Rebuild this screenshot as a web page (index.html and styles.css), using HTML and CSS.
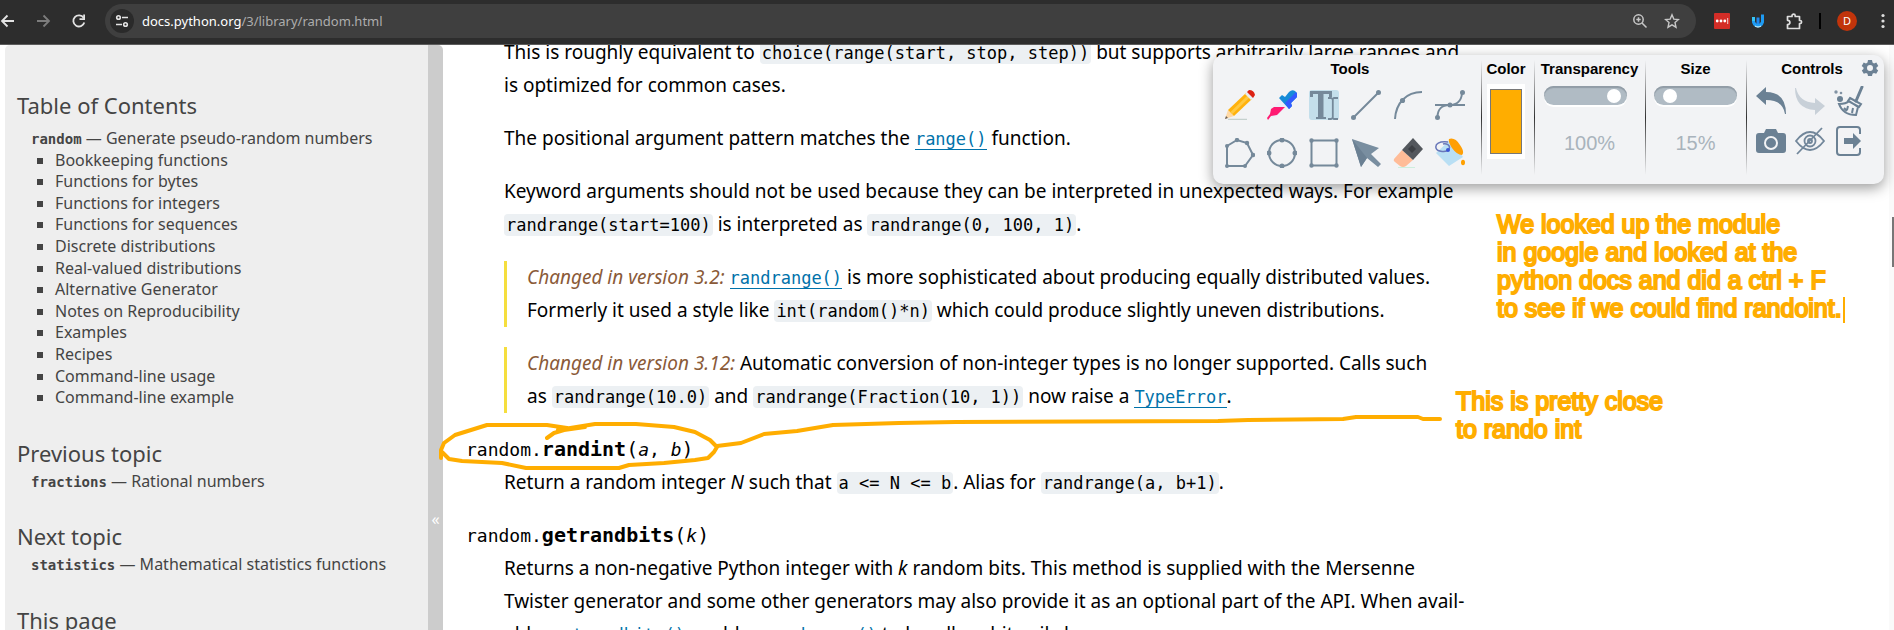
FILE: index.html
```html
<!DOCTYPE html>
<html lang="en">
<head>
<meta charset="utf-8">
<title>random — Generate pseudo-random numbers</title>
<link rel="stylesheet" href="styles.css">
</head>
<body>
<header class="browser">
  <nav class="browser-nav">
    <button class="ghost" aria-label="Back"><svg width="16" height="16" viewBox="0 0 16 16"><path d="M15 8H3M8.500 2.500 3 8l5.500 5.500" fill="none" stroke="#e3e3e3" stroke-width="1.800"/></svg></button>
    <button class="ghost" aria-label="Forward"><svg width="16" height="16" viewBox="0 0 16 16"><path d="M2 8h12M8.500 2.500 14 8l-5.500 5.500" fill="none" stroke="#7c7c7c" stroke-width="1.800"/></svg></button>
    <button class="ghost" aria-label="Reload"><svg width="16" height="16" viewBox="0 0 16 16"><path d="M13.300 9.500A5.600 5.600 0 1 1 12.600 4.800" fill="none" stroke="#e3e3e3" stroke-width="1.800"/><path d="M14 1.500V7H8.500V5.300h3.700V1.500z" fill="#e3e3e3"/></svg></button>
  </nav>
  <div class="address">
    <button class="site-info" aria-label="Site information"><svg width="14" height="14" viewBox="0 0 14 14" fill="none" stroke="#e3e3e3" stroke-width="1.600"><circle cx="3.500" cy="3.500" r="1.800"/><path d="M7 3.500h6M1 10.500h6"/><circle cx="10.500" cy="10.500" r="1.800"/></svg></button>
    <div class="url" role="textbox" aria-label="Address"><span class="host">docs.python.org</span>/3/library/random.html</div>
    <button class="ghost" aria-label="Zoom"><svg width="16" height="16" viewBox="0 0 16 16" fill="none" stroke="#c7c7c7" stroke-width="1.500"><circle cx="6.500" cy="6.500" r="4.700"/><path d="m10 10 4.500 4.500M4.300 6.500h4.400M6.500 4.300v4.400"/></svg></button>
    <button class="ghost" aria-label="Bookmark"><svg width="16" height="16" viewBox="0 0 16 16"><path d="m8 1.800 1.800 4.300 4.700.4-3.500 3.100 1 4.600L8 11.800l-4 2.400 1-4.600L1.500 6.500l4.700-.4z" fill="none" stroke="#c7c7c7" stroke-width="1.400"/></svg></button>
  </div>
  <div class="extensions">
    <button class="ghost" aria-label="Password manager"><svg width="16" height="16" viewBox="0 0 16 16"><rect width="16" height="16" rx="1" fill="#d32d27"/><circle cx="3.200" cy="8" r="1.400" fill="#fff"/><circle cx="7" cy="8" r="1.400" fill="#fff"/><circle cx="10.800" cy="8" r="1.400" fill="#fff"/><path d="M13.700 5v6" stroke="#fff" stroke-width=".8"/></svg></button>
    <button class="ghost" aria-label="Annotation tool"><svg width="14" height="16" viewBox="0 0 14 16"><path d="M2.500 6v3q1 3.500 4.500 3.500T11.500 9V1.500" fill="none" stroke="#1e9bf3" stroke-width="3"/><path d="M7 4.500V11" stroke="#1e88f0" stroke-width="3"/><path d="M2.500 4v4" stroke="#35c4f7" stroke-width="3"/><path d="M4 13q3 2 6 0" fill="none" stroke="#b8ecff" stroke-width="1.500"/></svg></button>
    <button class="ghost" aria-label="Extensions"><svg width="17" height="17" viewBox="0 0 17 17"><path d="M1.500 3.500H6V2.700a1.600 1.600 0 0 1 3.200 0v.8h4.300v4h.5a1.600 1.600 0 0 1 0 3.200h-.5v4.800h-12v-4c3.200-.2 3.200-4 0-4.200z" fill="none" stroke="#dedede" stroke-width="1.700" stroke-linejoin="round"/></svg></button>
    <span class="divider"></span>
    <button class="avatar" aria-label="Profile">D</button>
    <button class="ghost" aria-label="Menu"><svg width="4" height="16" viewBox="0 0 4 16" fill="#dedede"><circle cx="2" cy="2.500" r="1.600"/><circle cx="2" cy="8" r="1.600"/><circle cx="2" cy="13.500" r="1.600"/></svg></button>
  </div>
</header>

<div class="page">
  <aside class="sidebar">
    <section>
      <h3>Table of Contents</h3>
      <p><a href="#"><code>random</code> — Generate pseudo-random numbers</a></p>
      <ul>
        <li><a href="#">Bookkeeping functions</a></li>
        <li><a href="#">Functions for bytes</a></li>
        <li><a href="#">Functions for integers</a></li>
        <li><a href="#">Functions for sequences</a></li>
        <li><a href="#">Discrete distributions</a></li>
        <li><a href="#">Real-valued distributions</a></li>
        <li><a href="#">Alternative Generator</a></li>
        <li><a href="#">Notes on Reproducibility</a></li>
        <li><a href="#">Examples</a></li>
        <li><a href="#">Recipes</a></li>
        <li><a href="#">Command-line usage</a></li>
        <li><a href="#">Command-line example</a></li>
      </ul>
    </section>
    <section>
      <h3>Previous topic</h3>
      <p><a href="#"><code>fractions</code> — Rational numbers</a></p>
    </section>
    <section>
      <h3>Next topic</h3>
      <p><a href="#"><code>statistics</code> — Mathematical statistics functions</a></p>
    </section>
    <section>
      <h3>This page</h3>
    </section>
  </aside>
  <button class="collapse" aria-label="Collapse sidebar">«</button>

  <main class="docs">
    <div class="desc">
      <p>This is roughly equivalent to <code>choice(range(start, stop, step))</code> but supports arbitrarily large ranges and<br>is optimized for common cases.</p>
      <p>The positional argument pattern matches the <a href="#">range()</a> function.</p>
      <p>Keyword arguments should not be used because they can be interpreted in unexpected ways. For example<br><code>randrange(start=100)</code> is interpreted as <code>randrange(0, 100, 1)</code>.</p>
      <p class="changed"><em>Changed in version 3.2:</em> <a href="#">randrange()</a> is more sophisticated about producing equally distributed values.<br>Formerly it used a style like <code>int(random()*n)</code> which could produce slightly uneven distributions.</p>
      <p class="changed"><em>Changed in version 3.12:</em> Automatic conversion of non-integer types is no longer supported. Calls such<br>as <code>randrange(10.0)</code> and <code>randrange(Fraction(10, 1))</code> now raise a <a href="#">TypeError</a>.</p>
    </div>
    <h4>random.<b>randint</b><span class="paren">(</span><i>a</i>, <i>b</i><span class="paren">)</span></h4>
    <div class="desc">
      <p>Return a random integer <i>N</i> such that <code>a &lt;= N &lt;= b</code>. Alias for <code>randrange(a, b+1)</code>.</p>
    </div>
    <h4>random.<b>getrandbits</b><span class="paren">(</span><i>k</i><span class="paren">)</span></h4>
    <div class="desc">
      <p>Returns a non-negative Python integer with <i>k</i> random bits. This method is supplied with the Mersenne<br>Twister generator and some other generators may also provide it as an optional part of the API. When avail-<br>able, <a href="#">getrandbits()</a> enables <a href="#">randrange()</a> to handle arbitrarily large ranges.</p>
    </div>
  </main>
  <div class="scrollbar"><span class="thumb"></span></div>
</div>

<svg class="ink" width="1010" height="70" viewBox="435 410 1010 70" fill="none" stroke="#ffad00" stroke-width="4" stroke-linecap="round" stroke-linejoin="round">
  <path d="M441 458v-8l3-7 11-8 32-10h60l20 3M547 438l7-5 10-3 21-3M558 430l37-6h41l38 3 21 5 15 8 7 7-3 5-6 6-13 2-31 3-35 2-10 3h-93l-24-5-40-2-13-2-7-7"/>
  <path d="m717 446 24-3 23-9 33-3 36-6 66-2 57-1 262-1 30-1 95-1 13-2h62l5 2h17"/>
</svg>
<p class="note note-top">We looked up the module<br>in google and looked at the<br>python docs and did a ctrl + F<br>to see if we could find randoint.<span class="caret"></span></p>
<p class="note note-bottom">This is pretty close<br>to rando int</p>

<section class="toolbar" aria-label="Annotation toolbar">
  <div class="group tools">
    <h2>Tools</h2>
    <div class="tool-grid">
      <button class="ghost" aria-label="Pencil"><svg width="30" height="30" viewBox="0 0 30 30"><path d="M3 29.300h19" stroke="#b9c8c5"/><path d="M0 29 3 20l6 6z" fill="#ffd9a6"/><path d="M3 20 21 3l6 6L9 26z" fill="#ffb20d"/><path d="M5.500 22 23 5l2 2L7.500 24z" fill="#ffc942"/><path d="m20 4 2.500-2.500 6 6L26 10z" fill="#e8edf0"/><path d="m22 2 2-2q5 0 6 5l-2 3z" fill="#dc2113"/><path d="m0 29 1-3 2 2z" fill="#675f58"/></svg></button>
      <button class="ghost" aria-label="Color picker"><svg width="30" height="30" viewBox="0 0 30 30"><path d="M4 19 15 9l6 6-11 11-6 2z" fill="#eceef8"/><path d="m4 19 3-2h11l-8 8-6 1-3 4-1-2 3-4z" fill="#ff1a72"/><path d="m12 8 3-3 3 2 4-5q3-3 6-1 3 2 2 6l-6 6 1 3-3 3z" fill="#168bd8"/><path d="m18 13 11-11q2 2 1 5l-6 6 1 3-3 3z" fill="#335aff"/></svg></button>
      <button class="ghost" aria-label="Text" aria-pressed="true"><svg width="30" height="30" viewBox="0 0 30 30"><rect width="30" height="30" rx="3" fill="#c4dfeb"/><path d="M1 1h22v6h-3V4h-5.500v23H17v2H7v-2h2V4H4v3H1z" fill="#75899a"/><path d="M19 8h3l1.500 1L25 8h4M19 29h3l1.500-1 1.500 1h4M23.800 9v19" fill="none" stroke="#75899a" stroke-width="1.800"/></svg></button>
      <button class="ghost" aria-label="Line"><svg class="line-art" width="30" height="30" viewBox="0 0 30 30"><path d="M2.500 27.500 27.500 2.500"/><circle cx="2.500" cy="27.500" r="1.500"/><circle cx="27.500" cy="2.500" r="1.500"/></svg></button>
      <button class="ghost" aria-label="Arc"><svg class="line-art" width="30" height="30" viewBox="0 0 30 30"><path d="M2 29C3 13 13 2 29 2"/><circle cx="9.500" cy="10.500" r="1.600"/></svg></button>
      <button class="ghost" aria-label="Curve"><svg class="line-art" width="30" height="30" viewBox="0 0 30 30"><path d="M0 15h30M2.500 27c0-8 5-12 12-12s12-4 12.500-12"/><circle cx="2.500" cy="27.500" r="1.500"/><circle cx="27.500" cy="2.500" r="1.500"/><circle cx="15" cy="15" r="1.500"/></svg></button>
      <button class="ghost" aria-label="Polygon"><svg class="line-art" width="30" height="30" viewBox="0 0 30 30"><path d="M2 8 12 2l10 3 6 12-8 11H2z"/><circle cx="2" cy="8" r="1"/><circle cx="12" cy="2" r="1.200"/><circle cx="22" cy="5" r="1.200"/><circle cx="28" cy="17" r="1.200"/><circle cx="20" cy="28" r="1"/><circle cx="2" cy="28" r="1"/></svg></button>
      <button class="ghost" aria-label="Ellipse"><svg class="line-art" width="30" height="30" viewBox="0 0 30 30"><circle cx="15" cy="15" r="13"/><circle cx="15" cy="2" r="1.500"/><circle cx="15" cy="28" r="1.500"/><circle cx="2" cy="15" r="1.500"/><circle cx="28" cy="15" r="1.500"/></svg></button>
      <button class="ghost" aria-label="Rectangle"><svg class="line-art" width="30" height="30" viewBox="0 0 30 30"><path d="M2.500 2.500h25v25h-25z"/><circle cx="2.500" cy="2.500" r="1.200"/><circle cx="27.500" cy="2.500" r="1.200"/><circle cx="2.500" cy="27.500" r="1.200"/><circle cx="27.500" cy="27.500" r="1.200"/></svg></button>
      <button class="ghost" aria-label="Select"><svg width="30" height="30" viewBox="0 0 30 30"><path d="m1 1 27 9-8 6 10 10-3 3-11-9-6 9z" fill="#798ea0"/><path d="M1 1 16 20l-6 9z" fill="#6b8093"/></svg></button>
      <button class="ghost" aria-label="Eraser"><svg width="30" height="30" viewBox="0 0 30 30"><path d="M5 29.500h17" stroke="#cdeedd"/><path d="M1 21 9 12l11 10-7 6q-3 2-6 0l-5-4q-2-1-1-3z" fill="#ffbc98"/><path d="m9 12 11-12 10 11-10 11z" fill="#53575d"/><path d="m19 7 4 4-4 4-4-4z" fill="#3c3f44"/></svg></button>
      <button class="ghost" aria-label="Fill"><svg width="30" height="30" viewBox="0 0 30 30"><path d="M1 15 15 2l13 17-14 9z" fill="#b9dff4"/><path d="M14 1q6-2 11 6 5 7 2 10-5 0-10-7-4-6-3-9z" fill="#ff9f05"/><path d="M13 4C4 3 0 6 1 10s11 5 13 1-3-6-6-5" fill="none" stroke="#6977b9" stroke-width="1.500"/><circle cx="13" cy="12" r="2" fill="#3a55d5"/><ellipse cx="28" cy="24.500" rx="2" ry="2.800" fill="#ffa000"/></svg></button>
    </div>
  </div>
  <div class="group color">
    <h2>Color</h2>
    <button class="swatch" aria-label="Pick color"></button>
  </div>
  <div class="group transparency">
    <h2><label for="transparency">Transparency</label></h2>
    <input class="slider" id="transparency" type="range" min="0" max="100" value="97">
    <output for="transparency">100%</output>
  </div>
  <div class="group size">
    <h2><label for="size">Size</label></h2>
    <input class="slider" id="size" type="range" min="0" max="100" value="8">
    <output for="size">15%</output>
  </div>
  <div class="group controls">
    <h2>Controls</h2>
    <button class="ghost gear" aria-label="Settings"><svg width="16" height="16" viewBox="0 0 16 16"><path fill="#6c8194" fill-rule="evenodd" d="M6 0h4l.5 2.500 1.500.9 2.300-.9 2 3.500L14.500 7.500v1.400l1.700 1.500-2 3.300-2.300-.8-1.400.8L10 16H6l-.5-2.300-1.400-.8-2.300.8-2-3.300L1.500 8.900V7.500L-.3 6l2-3.500 2.300.9 1.500-.9zM8 5a3 3 0 1 0 0 6 3 3 0 0 0 0-6z"/></svg></button>
    <div class="control-grid">
      <button class="ghost" aria-label="Undo"><svg width="30" height="30" viewBox="0 0 30 30"><path d="M0 10 10 1v5q20 0 20 22h-1Q27 14 10 14v5z" fill="#6b8194"/></svg></button>
      <button class="ghost" aria-label="Redo"><svg width="30" height="30" viewBox="0 0 30 30"><path d="m30 20-10 9v-5Q0 23 0 2h1q3 14 19 15v-5z" fill="#c8d0d8"/></svg></button>
      <button class="ghost" aria-label="Clear"><svg width="30" height="30" viewBox="0 0 30 30"><path d="m28 1-6 14" stroke="#6b8194" stroke-width="3" stroke-linecap="round"/><path d="m16 12 11 6-2 3-11-6zM5 18q7 0 10-3l9 6-2 8Q9 29 5 18zm5 4 3 3m1-5-1 4m6-2-1 5" fill="none" stroke="#6b8194" stroke-width="2"/><circle cx="6" cy="13" r="3" fill="#6b8194"/><circle cx="2" cy="6" r="1.700" fill="#8293a4"/><circle cx="7" cy="7" r="1.300" fill="#8293a4"/></svg></button>
      <button class="ghost" aria-label="Screenshot"><svg width="30" height="30" viewBox="0 0 30 30"><path d="M3 7h5l2-4h10l2 4h5q3 0 3 3v14q0 3-3 3H3q-3 0-3-3V10q0-3 3-3z" fill="#6b8194"/><circle cx="15" cy="17" r="6" fill="#6b8194" stroke="#f2f3f5" stroke-width="2"/></svg></button>
      <button class="ghost" aria-label="Hide"><svg width="30" height="30" viewBox="0 0 30 30" fill="none" stroke="#71869a" stroke-width="1.800"><path d="M1 15Q8 6 15 6t14 9q-7 9-14 9T1 15zM2 28 27 2"/><circle cx="15" cy="15" r="5.500"/><circle cx="15" cy="15" r="2"/></svg></button>
      <button class="ghost" aria-label="Exit"><svg width="30" height="30" viewBox="0 0 30 30"><path d="M26 8V4q0-3-3-3H6Q3 1 3 4v22q0 3 3 3h17q3 0 3-3v-4" fill="none" stroke="#6b8194" stroke-width="2"/><path d="M10 12h9V7l8 8-8 8v-5h-9z" fill="#6b8194"/></svg></button>
    </div>
  </div>
</section>
</body>
</html>
```
FILE: styles.css
```css
* { box-sizing: border-box; }

body {
  margin: 0;
  height: 100vh;
  display: flex;
  flex-direction: column;
  position: relative;
  overflow: hidden;
  background: #fff;
  color: #000;
  font-family: "Noto Sans", "Open Sans", sans-serif;
}

button { margin: 0; padding: 0; border: 0; font: inherit; cursor: pointer; }
h2, h3, h4, p, ul { margin: 0; padding: 0; }
.ghost { display: flex; background: none; }

/* Browser bar */
.browser {
  flex: none;
  display: flex;
  align-items: center;
  height: 45px;
  padding-bottom: 2px;
  background: #2d2d2d;
  border-bottom: 1px solid #5c5c5c;
}
.browser-nav { display: flex; gap: 20px; padding-right: 18px; margin-left: -1px; }
.address {
  flex: 1;
  display: flex;
  align-items: center;
  gap: 16px;
  height: 34px;
  padding: 0 16px 0 5px;
  border-radius: 17px;
  background: #3f3f3f;
}
.site-info {
  display: flex;
  align-items: center;
  justify-content: center;
  width: 24px;
  height: 24px;
  border-radius: 50%;
  background: #2a2a2a;
}
.url { flex: 1; margin-left: -8px; color: #adadad; font-size: 13px; }
.host { color: #fff; }
.extensions { display: flex; align-items: center; padding: 0 9px 0 18px; }
.extensions svg { display: block; }
.extensions .ghost + .ghost { margin-left: 21px; }
.divider { width: 2px; height: 16px; margin: 0 16px; background: #000; }
.avatar {
  width: 20px;
  height: 20px;
  margin-right: 24px;
  border-radius: 50%;
  background: #c1340b;
  color: #fff;
  font-size: 11px;
  line-height: 20px;
}

/* Page */
.page { flex: 1; min-height: 0; display: flex; overflow: hidden; }
.sidebar {
  flex: none;
  width: 423px;
  margin-left: 5px;
  padding: 45px 12px 0;
  background: #eee;
  border-top-left-radius: 5px;
  color: #444;
  font-size: 16px;
  line-height: 1.35;
  white-space: nowrap;
}
.sidebar section { margin-bottom: 29px; }
.sidebar h3 { margin-bottom: 8px; font-size: 22px; font-weight: 400; line-height: 30px; }
.sidebar section + section h3 { margin-bottom: 3px; }
.sidebar p { padding-left: 14px; }
.sidebar a { color: inherit; text-decoration: none; }
.sidebar code { font: bold 14px "DejaVu Sans Mono", monospace; }
.sidebar ul { padding-left: 38px; list-style: square; }
.collapse {
  flex: none;
  display: flex;
  justify-content: center;
  width: 15px;
  padding-top: 463px;
  border-top-right-radius: 5px;
  background: #ccc;
  color: #fff;
  font-size: 16px;
}

.docs {
  flex: 1;
  margin-top: -9px;
  padding-left: 23px;
  font-size: 19px;
  line-height: 33px;
  white-space: nowrap;
}
.desc { padding-left: 38px; }
.desc p { margin-bottom: 20px; }
.docs code, .docs .desc a {
  font-family: "DejaVu Sans Mono", "Liberation Mono", monospace;
  font-size: 17px;
  line-height: 1;
}
.docs code { padding: 1px 2px; border-radius: 4px; background: #ecf0f3; }
.docs .desc a { color: #0072aa; text-decoration: none; border-bottom: 1px solid #0072aa; }
.docs h4 { height: 33px; font: 18px/33px "DejaVu Sans Mono", "Liberation Mono", monospace; }
.docs h4 b { font-size: 20px; line-height: 1; }
.docs .changed { padding-left: 20px; border-left: 3px solid #f5de3e; }
.changed em { color: #8a5a38; }
.paren { font-size: 20px; line-height: 1; }

.scrollbar { flex: none; width: 5px; background: #fafafa; padding: 172px 0 0 3px; }
.thumb { display: block; width: 2px; height: 50px; background: #777; }

/* Annotations drawn over the page */
.ink { position: absolute; left: 435px; top: 410px; }
.note {
  position: absolute;
  color: #ffad00;
  font: 25px/28px "Liberation Sans", Arial, sans-serif;
  -webkit-text-stroke: 2px #ffad00;
  white-space: nowrap;
}
.note-top { left: 1497px; top: 210px; }
.note-bottom { left: 1456px; top: 387px; }
.caret { display: inline-block; width: 2px; height: 26px; margin-left: 1px; vertical-align: -6px; background: #ffad00; }

/* Toolbar */
.toolbar {
  position: absolute;
  top: 55px;
  right: 10px;
  display: flex;
  height: 129px;
  border-radius: 10px;
  background: #f2f3f5;
  box-shadow: 0 4px 14px rgba(0, 0, 0, .4);
  font-family: "Liberation Sans", Arial, sans-serif;
}
.group {
  position: relative;
  display: flex;
  flex-direction: column;
  align-items: center;
  padding-top: 6px;
}
.group + .group::before {
  content: "";
  position: absolute;
  left: 0;
  top: 5px;
  width: 1px;
  height: 115px;
  background: linear-gradient(transparent, #333 50%, transparent);
}
.group h2 { font-size: 15px; font-weight: 700; line-height: 16px; }
.tools { width: 268px; padding-left: 6px; }
.tool-grid {
  display: grid;
  grid-template-columns: repeat(6, 30px);
  column-gap: 12px;
  row-gap: 18px;
  margin: 13px 10px 0 0;
}
.line-art { fill: #75899a; stroke: #75899a; stroke-width: 2; }
.line-art path, .line-art [r="13"] { fill: none; }
.color { width: 53px; padding-right: 3px; }
.swatch {
  width: 38px;
  height: 75px;
  margin-top: 7px;
  border: solid #fff;
  border-width: 5px 3px;
  background: #ffad00;
  box-shadow: inset 0 0 0 1px #777;
}
.transparency { width: 111px; }
.size { width: 101px; }
.slider {
  appearance: none;
  width: 83px;
  height: 19px;
  margin: 9px 0 0;
  padding: 0 4px;
  border-radius: 10px;
  background: #b0bbc4;
  box-shadow: inset 0 2px 1px #919ca6, 0 2px 0 #fff;
}
.slider::-webkit-slider-thumb {
  appearance: none;
  width: 14px;
  height: 14px;
  border-radius: 50%;
  background: #fff;
}
.transparency .slider { margin-right: 9px; }
.group output { margin-top: 27px; color: #a9b3bc; font-size: 20px; line-height: 22px; }
.controls { width: 138px; padding-right: 6px; }
.gear { position: absolute; top: 5px; right: 6px; }
.gear svg { overflow: visible; }
.control-grid {
  display: grid;
  grid-template-columns: repeat(3, 30px);
  column-gap: 9px;
  row-gap: 10px;
  margin: 9px 4px 0 0;
}
```
